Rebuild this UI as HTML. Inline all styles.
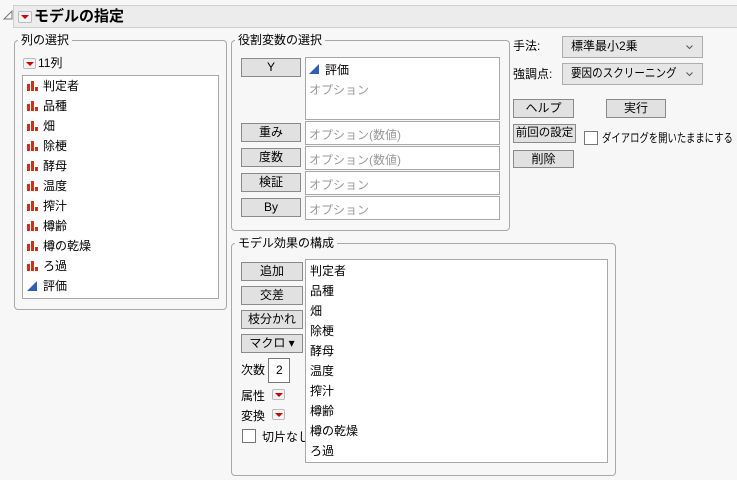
<!DOCTYPE html>
<html><head><meta charset="utf-8"><style>
*{box-sizing:border-box;margin:0;padding:0}
body{width:737px;height:480px;background:#f7f7f7;font-family:"Liberation Sans","Noto Sans CJK JP",sans-serif;font-size:12px;color:#000;position:relative;overflow:hidden}
.a{position:absolute;white-space:nowrap}
.fs{position:absolute;border:1px solid #a8a8a8;border-radius:4px}
.lg{position:absolute;background:#f7f7f7;padding:0 3px;font-size:12px;line-height:14px}
.btn{position:absolute;background:#e1e1e1;border:1px solid #8a8a8a;text-align:center;font-size:12px;line-height:16px;white-space:nowrap}
.box{position:absolute;background:#fff;border:1px solid #a8a8a8}
.ph{color:#9a9a9a;position:absolute;left:3px;font-size:12px;white-space:nowrap}
.rb{position:absolute;width:13px;height:11px;background:#f4f4f4;border:1px solid #bbb;border-radius:2px}
.rb:after{content:"";position:absolute;left:2px;top:3px;border-left:4px solid transparent;border-right:4px solid transparent;border-top:4px solid #c00}
.it{position:absolute;left:20px;font-size:12px;line-height:14px}
.bar{position:absolute;left:4px;width:11px;height:11px}
.cb{position:absolute;width:14px;height:14px;background:#fff;border:1px solid #555}
.cmb{position:absolute;background:#e6e6e6;border:1px solid #adadad;font-size:12px;line-height:19px;padding-left:8px;white-space:nowrap}
.cmb svg{position:absolute;right:9px;top:8px}
.ml{position:absolute;left:4px;font-size:12px;line-height:14px}
</style></head><body>
<svg class="a" style="left:3px;top:10px" width="10" height="10"><polygon points="9,1 9,9 1,9" fill="none" stroke="#777"/></svg>
<div class="a" style="left:13px;top:5px;width:724px;height:23px;background:#ececec;border:1px solid #cfcfcf;border-right:none"></div>
<div class="rb" style="left:18px;top:11px;width:14px;height:12px"></div>
<div class="a" style="left:34px;top:7px;font-size:15px;font-weight:bold;line-height:19px">モデルの指定</div>

<svg width="0" height="0" style="position:absolute"><defs><g id="b"><rect x="0" y="4" width="3" height="7" fill="#c8321e"/><rect x="4" y="1" width="3" height="10" fill="#c8321e"/><rect x="8" y="7" width="3" height="4" fill="#c8321e"/></g></defs></svg>

<div class="fs" style="left:14px;top:40px;width:213px;height:270px"></div>
<div class="lg" style="left:18px;top:33px">列の選択</div>
<div class="rb" style="left:23px;top:58px"></div>
<div class="a" style="left:38px;top:56px;line-height:14px">11列</div>
<div class="box" style="left:22px;top:75px;width:197px;height:224px">
<svg class="bar" style="top:4px"><use href="#b"/></svg><div class="it" style="top:3px">判定者</div>
<svg class="bar" style="top:24px"><use href="#b"/></svg><div class="it" style="top:23px">品種</div>
<svg class="bar" style="top:44px"><use href="#b"/></svg><div class="it" style="top:43px">畑</div>
<svg class="bar" style="top:64px"><use href="#b"/></svg><div class="it" style="top:63px">除梗</div>
<svg class="bar" style="top:84px"><use href="#b"/></svg><div class="it" style="top:83px">酵母</div>
<svg class="bar" style="top:104px"><use href="#b"/></svg><div class="it" style="top:103px">温度</div>
<svg class="bar" style="top:124px"><use href="#b"/></svg><div class="it" style="top:123px">搾汁</div>
<svg class="bar" style="top:144px"><use href="#b"/></svg><div class="it" style="top:143px">樽齢</div>
<svg class="bar" style="top:164px"><use href="#b"/></svg><div class="it" style="top:163px">樽の乾燥</div>
<svg class="bar" style="top:184px"><use href="#b"/></svg><div class="it" style="top:183px">ろ過</div>
<svg class="bar" style="top:204px"><polygon points="0,11 10,1 10,11" fill="#2f5fb3"/></svg><div class="it" style="top:203px">評価</div>
</div>

<div class="fs" style="left:231px;top:40px;width:279px;height:191px"></div>
<div class="lg" style="left:235px;top:33px">役割変数の選択</div>
<div class="btn" style="left:241px;top:58px;width:60px;height:19px">Y</div>
<div class="box" style="left:305px;top:57px;width:195px;height:63px">
<svg class="a" style="left:3px;top:5px" width="11" height="11"><polygon points="0,11 10,1 10,11" fill="#2f5fb3"/></svg>
<div class="a" style="left:19px;top:3px">評価</div>
<div class="ph" style="top:23px">オプション</div></div>
<div class="btn" style="left:241px;top:123px;width:60px;height:19px">重み</div>
<div class="box" style="left:305px;top:121px;width:195px;height:24px"><div class="ph" style="top:4px">オプション(数値)</div></div>
<div class="btn" style="left:241px;top:148px;width:60px;height:19px">度数</div>
<div class="box" style="left:305px;top:146px;width:195px;height:24px"><div class="ph" style="top:4px">オプション(数値)</div></div>
<div class="btn" style="left:241px;top:173px;width:60px;height:19px">検証</div>
<div class="box" style="left:305px;top:171px;width:195px;height:24px"><div class="ph" style="top:4px">オプション</div></div>
<div class="btn" style="left:241px;top:198px;width:60px;height:19px">By</div>
<div class="box" style="left:305px;top:196px;width:195px;height:24px"><div class="ph" style="top:4px">オプション</div></div>

<div class="a" style="left:513px;top:37px">手法:</div>
<div class="cmb" style="left:562px;top:36px;width:141px;height:22px">標準最小2乗<svg width="7" height="5"><polyline points="0.5,0.5 3.5,3.5 6.5,0.5" fill="none" stroke="#555"/></svg></div>
<div class="a" style="left:513px;top:65px">強調点:</div>
<div class="cmb" style="left:562px;top:63px;width:141px;height:22px"><span style="display:inline-block;transform:scaleX(0.88);transform-origin:left">要因のスクリーニング</span><svg width="7" height="5"><polyline points="0.5,0.5 3.5,3.5 6.5,0.5" fill="none" stroke="#555"/></svg></div>
<div class="btn" style="left:513px;top:99px;width:61px;height:19px">ヘルプ</div>
<div class="btn" style="left:606px;top:99px;width:60px;height:19px">実行</div>
<div class="btn" style="left:513px;top:124px;width:63px;height:19px;font-size:11.5px">前回の設定</div>
<div class="cb" style="left:584px;top:131px;border-color:#777"></div>
<div class="a" style="left:602px;top:129px;font-size:12px;transform:scaleX(0.78);transform-origin:left">ダイアログを開いたままにする</div>
<div class="btn" style="left:513px;top:150px;width:61px;height:18px">削除</div>

<div class="fs" style="left:231px;top:243px;width:385px;height:233px"></div>
<div class="lg" style="left:235px;top:236px">モデル効果の構成</div>
<div class="btn" style="left:241px;top:262px;width:62px;height:19px">追加</div>
<div class="btn" style="left:241px;top:286px;width:62px;height:19px">交差</div>
<div class="btn" style="left:241px;top:310px;width:62px;height:19px">枝分かれ</div>
<div class="btn" style="left:241px;top:334px;width:62px;height:19px">マクロ ▾</div>
<div class="a" style="left:241px;top:361px">次数</div>
<div class="box" style="left:268px;top:358px;width:22px;height:25px;border-color:#777"><div class="a" style="left:7px;top:4px">2</div></div>
<div class="a" style="left:241px;top:387px">属性</div><div class="rb" style="left:272px;top:389px"></div>
<div class="a" style="left:241px;top:407px">変換</div><div class="rb" style="left:272px;top:409px"></div>
<div class="cb" style="left:242px;top:429px;border-color:#777"></div>
<div class="a" style="left:262px;top:428px">切片なし</div>
<div class="box" style="left:305px;top:259px;width:303px;height:204px">
<div class="ml" style="top:4px">判定者</div><div class="ml" style="top:24px">品種</div><div class="ml" style="top:44px">畑</div><div class="ml" style="top:64px">除梗</div><div class="ml" style="top:84px">酵母</div><div class="ml" style="top:104px">温度</div><div class="ml" style="top:124px">搾汁</div><div class="ml" style="top:144px">樽齢</div><div class="ml" style="top:164px">樽の乾燥</div><div class="ml" style="top:184px">ろ過</div>
</div>
</body></html>
